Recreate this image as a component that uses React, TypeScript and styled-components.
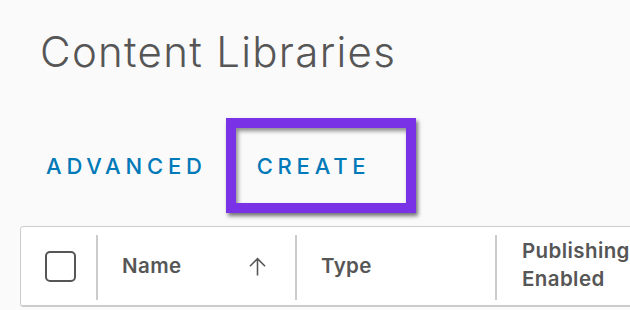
import { FC } from 'react'
import styled, { createGlobalStyle } from 'styled-components'

const font = `'Inter', 'Noto Sans', sans-serif`

const App: FC = () => (
  <>
    <GlobalLayout />
    <Page>
      <Title>Content Libraries</Title>
      <Toolbar>
        <FlatButton>Advanced</FlatButton>
        <Highlight>
          <FlatButton>Create</FlatButton>
        </Highlight>
      </Toolbar>
      <Grid>
        <HeaderRow>
          <CheckCell>
            <Checkbox />
          </CheckCell>
          <HeadCell width={199}>
            <span>Name</span>
            <SortIcon viewBox="0 0 20 20">
              <path d="M10 18.5V2.5M2.8 9.7L10 2.5l7.2 7.2" />
            </SortIcon>
          </HeadCell>
          <HeadCell width={200}>Type</HeadCell>
          <HeadCell width={200} last>
            Publishing
            <br />
            Enabled
          </HeadCell>
        </HeaderRow>
      </Grid>
    </Page>
  </>
)

const Page = styled.div`
  width: 630px;
  height: 310px;
  overflow: hidden;
  background: #fafafa;
`

const Title = styled.h1`
  margin: 0;
  padding: 24px 0 0 40px;
  height: 118px;
  box-sizing: border-box;
  font-family: ${font};
  font-weight: 300;
  font-size: 42px;
  line-height: 56px;
  letter-spacing: 1.3px;
  color: #565656;
`

const Toolbar = styled.div`
  display: flex;
  align-items: center;
  padding-left: 25px;
  height: 95px;
`

const FlatButton = styled.button`
  border: none;
  background: transparent;
  padding: 0 17px 0 21px;
  height: 60px;
  font-family: ${font};
  font-weight: 500;
  font-size: 22px;
  letter-spacing: 4.8px;
  text-transform: uppercase;
  color: #0079b8;
  cursor: pointer;
`

const Highlight = styled.div`
  display: flex;
  align-items: center;
  margin-left: 2px;
  width: 190px;
  height: 95px;
  box-sizing: border-box;
  border: 10px solid #7a32e6;
  box-shadow: 2px 3px 4px rgba(0, 0, 0, 0.55), inset 2px 3px 4px rgba(0, 0, 0, 0.45);
`

const Grid = styled.div`
  margin: 13px 0 0 20px;
  width: 700px;
  border: 1px solid #cccccc;
  border-radius: 3px;
  background: #ffffff;
`

const HeaderRow = styled.div`
  display: flex;
  height: 78px;
  border-bottom: 1px solid #cccccc;
`

const CheckCell = styled.div`
  width: 77px;
  display: flex;
  align-items: center;
  justify-content: center;
  position: relative;
  &::after {
    content: '';
    position: absolute;
    right: 0;
    top: 8px;
    bottom: 5px;
    width: 2px;
    background: #cccccc;
  }
`

const Checkbox = styled.div`
  width: 31px;
  height: 31px;
  box-sizing: border-box;
  border: 2px solid #565656;
  border-radius: 5px;
  margin-left: 1px;
`

const HeadCell = styled.div<{ width: number; last?: boolean }>`
  width: ${(p) => p.width}px;
  box-sizing: border-box;
  display: flex;
  align-items: center;
  justify-content: space-between;
  padding: 0 29px 0 24px;
  position: relative;
  font-family: ${font};
  font-weight: 600;
  font-size: 20.5px;
  line-height: 28px;
  letter-spacing: 0.4px;
  color: #565656;
  ${(p) => (p.last ? 'display: block; padding: 10px 0 0 25px;' : '')}
  &::after {
    content: '';
    display: ${(p) => (p.last ? 'none' : 'block')};
    position: absolute;
    right: 0;
    top: 8px;
    bottom: 5px;
    width: 2px;
    background: #cccccc;
  }
`

const SortIcon = styled.svg`
  width: 21px;
  height: 21px;
  fill: none;
  stroke: #565656;
  stroke-width: 1.5;
`

const GlobalLayout = createGlobalStyle`
  body {
    margin: 0;
    background: #fafafa;
  }
`

export default App
